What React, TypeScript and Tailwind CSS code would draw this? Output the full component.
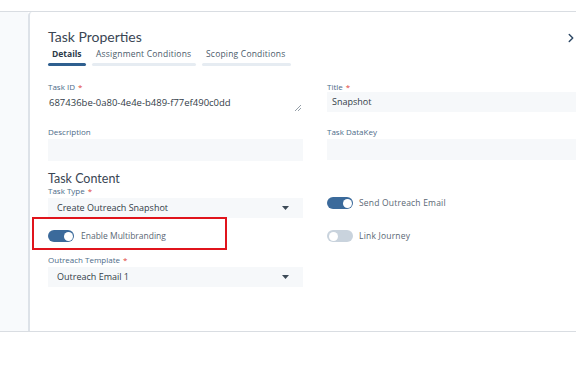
import { ChevronRight } from "lucide-react";

const Label = ({ text, required }: { text: string; required?: boolean }) => (
  <div className="h-[10px] text-[8px] leading-[10px] text-[#4d6b88]">
    {text}
    {required && <span className="ml-[3px] text-[#e0443a]">*</span>}
  </div>
);

const Toggle = ({ on }: { on: boolean }) => (
  <div
    className={`flex h-[12px] w-[26px] items-center rounded-full px-[1.5px] ${
      on ? "justify-end bg-[#3b6a9b]" : "justify-start bg-[#c9d3dd]"
    }`}
  >
    <div className="h-[9px] w-[9px] rounded-full bg-white" />
  </div>
);

const Caret = () => (
  <svg width="7" height="4" viewBox="0 0 7 4">
    <path d="M0 0h7L3.5 4z" fill="#3d4a57" />
  </svg>
);

export default function App() {
  return (
    <div className="h-[389px] w-[576px] overflow-hidden bg-white pt-[11px] font-['Open_Sans',sans-serif]">
      <div className="flex h-[321px] border-y border-[#d9dde2]">
        <div className="w-[28px] bg-[#f8fafc]" />
        <div className="relative flex-1 rounded-tl-[4px] border-l-2 border-[#dde2e8] bg-white pl-[18px] pt-[16px]">
          <ChevronRight className="absolute right-[-2px] top-[19px] h-[14px] w-[14px] text-[#2f4a66]" strokeWidth={2.5} />
          <div className="font-['Lato',sans-serif] text-[14px] leading-[18px] text-[#3a4654]">Task Properties</div>

          {/* tabs */}
          <div className="mt-[2px] flex gap-[6px] text-[8.5px] leading-[11px] tracking-[0.2px] text-[#4a5a6a]">
            <div className="w-[38px]">
              <div className="pl-[4px] font-bold tracking-normal text-[#2c3a48]">Details</div>
              <div className="mt-[4px] h-[3px] rounded-full bg-[#2f5f8f]" />
            </div>
            <div className="w-[104px]">
              <div className="pl-[4px]">Assignment Conditions</div>
              <div className="mt-[4px] h-[3px] rounded-full bg-[#e6ecf2]" />
            </div>
            <div className="w-[89px]">
              <div className="pl-[4px]">Scoping Conditions</div>
              <div className="mt-[4px] h-[3px] rounded-full bg-[#e6ecf2]" />
            </div>
          </div>

          <div className="mt-[16px] grid grid-cols-[255px_1fr] gap-x-[24px]">
            <div>
              <Label text="Task ID" required />
              <div className="relative mt-[5px] h-[15px] pl-[1px] text-[9.5px] leading-[12px] text-[#333d48]">
                687436be-0a80-4e4e-b489-f77ef490c0dd
                <svg className="absolute right-[2px] top-[8px]" width="6" height="6" viewBox="0 0 6 6">
                  <path d="M6 0L0 6M6 3L3 6" stroke="#7a8692" strokeWidth="0.8" />
                </svg>
              </div>
            </div>
            <div>
              <Label text="Title" required />
              <div className="flex h-[20px] items-center bg-[#f6f8fa] pl-[5px] text-[9px] text-[#333d48]">
                Snapshot
              </div>
            </div>

            <div className="mt-[15px]">
              <Label text="Description" />
              <div className="mt-[2px] h-[22px] bg-[#f6f8fa]" />
            </div>
            <div className="mt-[15px]">
              <Label text="Task DataKey" />
              <div className="mt-[2px] h-[21px] bg-[#f6f8fa]" />
            </div>
          </div>

          <div className="mt-[11px] font-['Lato',sans-serif] text-[12.5px] leading-[14px] text-[#3a4654]">Task Content</div>

          <div className="grid grid-cols-[255px_1fr] gap-x-[24px]">
            <div>
              <Label text="Task Type" required />
              <div className="mt-[2px] flex h-[20px] items-center justify-between bg-[#f6f8fa] pl-[9px] pr-[14px] text-[9px] text-[#333d48]">
                Create Outreach Snapshot
                <Caret />
              </div>
              <div className="mt-[12px] flex items-center gap-[7px]">
                <Toggle on />
                <span className="text-[8.5px] leading-[12px] text-[#5a6774]">Enable Multibranding</span>
              </div>
            </div>
            <div>
              <div className="mt-[11px] flex items-center gap-[6px]">
                <Toggle on />
                <span className="text-[8.5px] leading-[12px] tracking-[0.2px] text-[#5a6774]">Send Outreach Email</span>
              </div>
              <div className="mt-[21px] flex items-center gap-[6px]">
                <Toggle on={false} />
                <span className="text-[8.5px] leading-[12px] tracking-[0.2px] text-[#5a6774]">Link Journey</span>
              </div>
            </div>
          </div>

          <div className="mt-[13px] w-[255px]">
            <Label text="Outreach Template" required />
            <div className="mt-[2px] flex h-[20px] items-center justify-between bg-[#f6f8fa] pl-[9px] pr-[14px] text-[9px] text-[#333d48]">
              Outreach Email 1
              <Caret />
            </div>
          </div>

          {/* highlight box */}
          <div className="absolute left-[2px] top-[205px] h-[33px] w-[195px] border-[2.5px] border-[#e0141c]" />
        </div>
      </div>
    </div>
  );
}
